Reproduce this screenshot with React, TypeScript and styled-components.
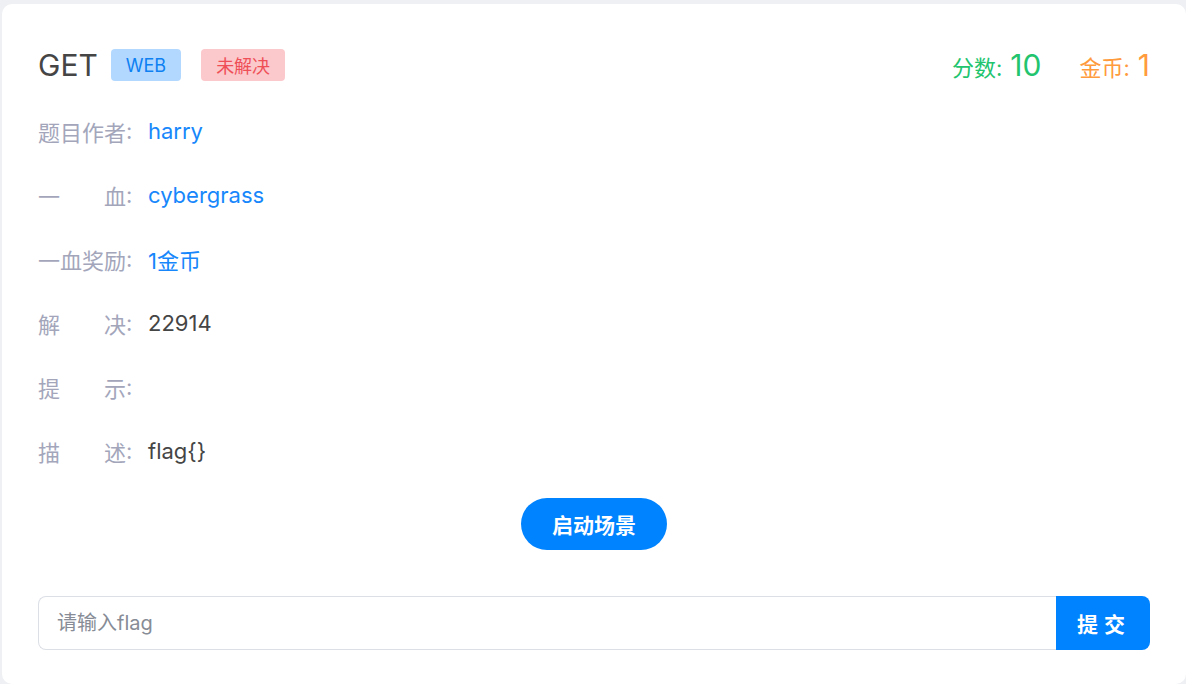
import React from "react";
import styled, { createGlobalStyle } from "styled-components";

const GlobalStyle = createGlobalStyle`
  html, body { margin: 0; padding: 0; background: #eff0f3; }
  body { font-family: Inter, "Noto Sans CJK SC", sans-serif; }
  * { box-sizing: border-box; }
`;

const Card = styled.div`
  margin: 4px 0 0 2px;
  width: 1184px;
  height: 680px;
  background: #fff;
  border-radius: 10px;
  padding: 29px 36px 0 36px;
  display: flex;
  flex-direction: column;
`;

const Header = styled.div`
  height: 64px;
  display: flex;
  align-items: center;
  justify-content: space-between;
`;

const TitleGroup = styled.div`
  display: flex;
  align-items: center;
`;

const Title = styled.h1`
  margin: 0 13px 0 0;
  font-size: 30px;
  font-weight: 400;
  color: #454545;
`;

const Tag = styled.span<{ tone: "blue" | "red" }>`
  height: 32px;
  padding: 0 15px;
  margin-right: 20px;
  display: inline-flex;
  align-items: center;
  border-radius: 4px;
  font-size: 18px;
  background: ${({ tone }) => (tone === "blue" ? "#b3d8ff" : "#fbc8cb")};
  color: ${({ tone }) => (tone === "blue" ? "#0d80f2" : "#ef4f57")};
`;

const Scores = styled.div`
  display: flex;
  align-items: baseline;
  gap: 38px;
`;

const Score = styled.span<{ color: string }>`
  color: ${({ color }) => color};
  font-size: 22px;
  display: inline-flex;
  align-items: baseline;
  gap: 8px;
  & b { font-weight: 400; font-size: 30px; }
`;

const InfoList = styled.div`
  margin-top: 2px;
  display: flex;
  flex-direction: column;
`;

const Row = styled.div`
  height: 64px;
  display: flex;
  align-items: center;
  font-size: 22px;
`;

const Label = styled.span`
  width: 88px;
  color: #a3a6bb;
  text-align: justify;
  text-align-last: justify;
`;

const Colon = styled.span`
  color: #a3a6bb;
  width: 22px;
`;

const Value = styled.span<{ link?: boolean }>`
  color: ${({ link }) => (link ? "#1787fb" : "#454545")};
`;

const LaunchRow = styled.div`
  margin-top: 15px;
  display: flex;
  justify-content: center;
`;

const LaunchButton = styled.button`
  width: 146px;
  height: 52px;
  border: none;
  border-radius: 26px;
  background: #0083ff;
  color: #fff;
  font-family: inherit;
  font-size: 21px;
  font-weight: 700;
  cursor: pointer;
`;

const FlagForm = styled.div`
  margin-top: 46px;
  display: flex;
  height: 54px;
`;

const FlagInput = styled.input`
  flex: 1;
  height: 100%;
  border: 1px solid #dcdfe6;
  border-right: none;
  border-radius: 8px 0 0 8px;
  padding: 0 18px;
  font-family: inherit;
  font-size: 20px;
  color: #454545;
  outline: none;
  &::placeholder { color: #878c96; }
`;

const SubmitButton = styled.button`
  width: 94px;
  height: 100%;
  border: none;
  border-radius: 0 8px 8px 0;
  background: #0083ff;
  color: #fff;
  font-family: inherit;
  font-size: 21px;
  font-weight: 700;
  letter-spacing: 6px;
  padding-left: 8px;
  cursor: pointer;
`;

const rows: { label: string; value: string; link?: boolean }[] = [
  { label: "题目作者", value: "harry", link: true },
  { label: "一血", value: "cybergrass", link: true },
  { label: "一血奖励", value: "1金币", link: true },
  { label: "解决", value: "22914" },
  { label: "提示", value: "" },
  { label: "描述", value: "flag{}" },
];

export default function App() {
  return (
    <>
      <GlobalStyle />
      <Card>
        <Header>
          <TitleGroup>
            <Title>GET</Title>
            <Tag tone="blue">WEB</Tag>
            <Tag tone="red">未解决</Tag>
          </TitleGroup>
          <Scores>
            <Score color="#22c46e">分数: <b>10</b></Score>
            <Score color="#ff9a3d">金币: <b>1</b></Score>
          </Scores>
        </Header>
        <InfoList>
          {rows.map((r) => (
            <Row key={r.label}>
              <Label>{r.label}</Label>
              <Colon>:</Colon>
              <Value link={r.link}>{r.value}</Value>
            </Row>
          ))}
        </InfoList>
        <LaunchRow>
          <LaunchButton>启动场景</LaunchButton>
        </LaunchRow>
        <FlagForm>
          <FlagInput placeholder="请输入flag" />
          <SubmitButton>提交</SubmitButton>
        </FlagForm>
      </Card>
    </>
  );
}
